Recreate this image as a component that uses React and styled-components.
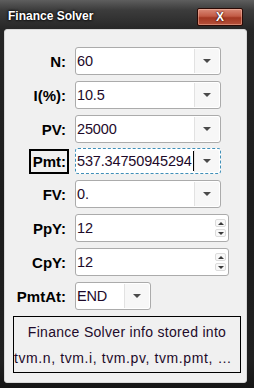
import React from 'react';
import styled, { createGlobalStyle } from 'styled-components';

const GlobalStyle = createGlobalStyle`
  html, body {
    margin: 0;
    padding: 0;
    background: #1a1a1a;
  }
`;

const Window = styled.div`
  width: 254px;
  height: 388px;
  display: flex;
  flex-direction: column;
  box-sizing: border-box;
  background: linear-gradient(180deg, #5e5e5e 0px, #3c3c3c 10px, #262626 30px, #1c1c1c 200px, #202020 360px, #151515 388px);
  font-family: 'Liberation Sans', Arial, sans-serif;
`;

const TitleBar = styled.div`
  height: 29px;
  display: flex;
  justify-content: space-between;
  align-items: flex-start;
  padding: 0 11px 0 8px;
  flex-shrink: 0;
`;

const Title = styled.div`
  margin-top: 9px;
  color: #fff;
  font-weight: bold;
  font-size: 12px;
  text-shadow: 0 0 3px #000, 0 0 2px #000;
`;

const CloseButton = styled.div`
  margin-top: 8px;
  width: 46px;
  height: 18px;
  box-sizing: border-box;
  border: 1px solid #2a0a05;
  border-radius: 2px;
  background: linear-gradient(180deg, #d98a78 0%, #c25a45 45%, #a33722 55%, #b6523c 100%);
  box-shadow: inset 0 0 0 1px rgba(255, 200, 180, 0.45);
  display: flex;
  align-items: center;
  justify-content: center;
  color: #fff;
  font-weight: bold;
  font-size: 12px;
  text-shadow: 0 0 2px #3a0a00, 0 0 1px #3a0a00;
`;

const Panel = styled.div`
  flex: 1;
  margin: 0 7px 5px 4px;
  background: #f0f0f0;
  border: 1px solid #d8d8d8;
  border-radius: 3px;
  box-sizing: border-box;
  padding: 17px 5px 0 3px;
  display: flex;
  flex-direction: column;
`;

const Form = styled.div`
  display: grid;
  grid-template-columns: 58px auto;
  column-gap: 9px;
  row-gap: 6px;
  align-items: center;
`;

const Label = styled.div`
  justify-self: end;
  font-weight: bold;
  font-size: 15px;
  color: #000;
  ${(p) =>
    p.$boxed &&
    `
    border: 2px solid #000;
    padding: 2px 1px 2px 2px;
    margin-right: -3px;
  `}
`;

const Field = styled.div`
  width: ${(p) => p.$width}px;
  height: 28px;
  box-sizing: border-box;
  background: #fff;
  border: 1px solid #ababab;
  border-radius: 3px;
  display: flex;
  align-items: stretch;
  ${(p) =>
    p.$focused &&
    `
    border: 1px dashed #3f8fb8;
    height: 26px;
    margin-top: -2px;
  `}
`;

const Value = styled.div`
  flex: 1;
  min-width: 0;
  display: flex;
  align-items: center;
  padding-left: 1px;
  font-size: 14.5px;
  letter-spacing: -0.15px;
  color: #1e0a2a;
  white-space: nowrap;
  overflow: hidden;
`;

const Caret = styled.span`
  display: inline-block;
  flex-shrink: 0;
  width: 1px;
  height: 20px;
  background: #000;
  margin-left: 1px;
`;

const DropButton = styled.div`
  width: 24px;
  flex-shrink: 0;
  margin: 1px 1px 1px 0;
  border-left: 1px solid #e2e2e2;
  border-radius: 0 2px 2px 0;
  background: #f7f7f7;
  display: flex;
  align-items: center;
  justify-content: center;
`;

const Arrow = styled.div`
  width: 0;
  height: 0;
  border-left: 4px solid transparent;
  border-right: 4px solid transparent;
  border-${(p) => (p.$up ? 'bottom' : 'top')}: 4px solid #4a4a4a;
`;

const SmallArrow = styled.div`
  width: 0;
  height: 0;
  border-left: 3px solid transparent;
  border-right: 3px solid transparent;
  border-${(p) => (p.$up ? 'bottom' : 'top')}: 3px solid #3a3a3a;
`;

const Spinner = styled.div`
  display: flex;
  flex-direction: column;
  justify-content: center;
  gap: 2px;
  margin-right: 2px;
`;

const SpinButton = styled.div`
  width: 11px;
  height: 8px;
  box-sizing: border-box;
  border: 1px solid #dcdcdc;
  border-radius: 2px;
  background: #f8f8f8;
  display: flex;
  align-items: center;
  justify-content: center;
`;

const InfoBox = styled.div`
  margin: 6px 0 0 5px;
  height: 57px;
  box-sizing: border-box;
  border: 1px solid #000;
  font-size: 14px;
  color: #1e0a2a;
  display: flex;
  flex-direction: column;
  justify-content: center;
  gap: 10px;
  overflow: hidden;
`;

const InfoLine = styled.div`
  white-space: nowrap;
  text-align: ${(p) => (p.$left ? 'left' : 'center')};
  letter-spacing: ${(p) => (p.$left ? '0.6px' : '0.3px')};
`;

const rows = [
  { label: 'N:', value: '60', kind: 'drop' },
  { label: 'I(%):', value: '10.5', kind: 'drop' },
  { label: 'PV:', value: '25000', kind: 'drop' },
  { label: 'Pmt:', value: '537.34750945294', kind: 'drop', focused: true },
  { label: 'FV:', value: '0.', kind: 'drop' },
  { label: 'PpY:', value: '12', kind: 'spin' },
  { label: 'CpY:', value: '12', kind: 'spin' },
  { label: 'PmtAt:', value: 'END', kind: 'small' },
];

function FieldFor({ row }) {
  const width = row.kind === 'spin' ? 154 : row.kind === 'small' ? 76 : 146;
  return (
    <Field $width={width} $focused={row.focused}>
      <Value>
        {row.value}
        {row.focused && <Caret />}
      </Value>
      {row.kind === 'spin' ? (
        <Spinner>
          <SpinButton>
            <SmallArrow $up />
          </SpinButton>
          <SpinButton>
            <SmallArrow />
          </SpinButton>
        </Spinner>
      ) : (
        <DropButton>
          <Arrow />
        </DropButton>
      )}
    </Field>
  );
}

export default function App() {
  return (
    <>
      <GlobalStyle />
      <Window>
        <TitleBar>
          <Title>Finance Solver</Title>
          <CloseButton>X</CloseButton>
        </TitleBar>
        <Panel>
          <Form>
            {rows.map((row) => (
              <React.Fragment key={row.label}>
                <Label $boxed={row.focused}>{row.label}</Label>
                <FieldFor row={row} />
              </React.Fragment>
            ))}
          </Form>
          <InfoBox>
            <InfoLine>Finance Solver info stored into</InfoLine>
            <InfoLine $left>tvm.n, tvm.i, tvm.pv, tvm.pmt, …</InfoLine>
          </InfoBox>
        </Panel>
      </Window>
    </>
  );
}
